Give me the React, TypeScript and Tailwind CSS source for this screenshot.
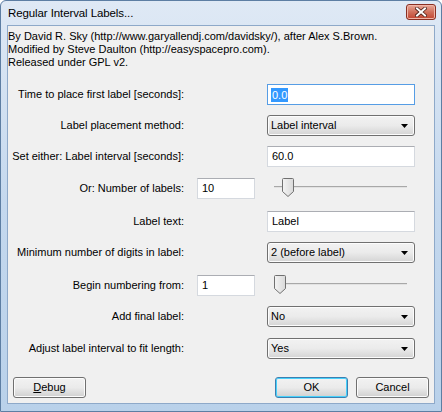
import React from "react";

// Win7 style "Regular Interval Labels..." dialog

const LABEL_W = "w-[176px]";

function TextBox({ value, small, selected }: { value: string; small?: boolean; selected?: boolean }) {
  return (
    <div
      className={`h-[21px] bg-white border flex items-center px-[3px] ${
        small ? "w-[58px]" : "w-[148px]"
      } ${selected ? "border-[#569de5]" : "border-[#d5d9df] border-t-[#abadb3]"}`}
    >
      {selected ? (
        <span className="bg-[#3399ff] text-white leading-[14px] px-px">{value}</span>
      ) : (
        <span className="px-px">{value}</span>
      )}
    </div>
  );
}

function Combo({ value }: { value: string }) {
  return (
    <div className="w-[148px] h-[21px] rounded-[3px] border border-[#707070] bg-gradient-to-b from-[#f2f2f2] via-[#ebebeb] to-[#d4d4d4] flex items-center justify-between pl-[3px] pr-[6px] shadow-[inset_0_0_0_1px_#fcfcfc]">
      <span>{value}</span>
      <svg width="7" height="4" viewBox="0 0 7 4">
        <path d="M0 0h7L3.5 4z" fill="#000" />
      </svg>
    </div>
  );
}

function Slider({ pos }: { pos: number }) {
  return (
    <div className="relative w-[133px] h-[21px] ml-[19px]">
      <div className="absolute left-0 right-0 top-[8px] h-[2px] border-t border-[#a8a8a8] bg-[#e2e2e2]" />
      <svg
        className="absolute top-0"
        style={{ left: pos }}
        width="12"
        height="19"
        viewBox="0 0 12 19"
      >
        <defs>
          <linearGradient id={`g${pos}`} x1="0" y1="0" x2="1" y2="0">
            <stop offset="0" stopColor="#f4f4f4" />
            <stop offset="1" stopColor="#d9d9d9" />
          </linearGradient>
        </defs>
        <path
          d="M1.5 0.5h9a1 1 0 0 1 1 1v12l-5.5 5-5.5-5v-12a1 1 0 0 1 1-1z"
          fill={`url(#g${pos})`}
          stroke="#707070"
        />
      </svg>
    </div>
  );
}

function Button({ children, primary, w = "w-[73px]" }: { children: React.ReactNode; primary?: boolean; w?: string }) {
  return (
    <div
      className={`${w} h-[21px] rounded-[3px] border flex items-center justify-center bg-gradient-to-b from-[#f2f2f2] via-[#ebebeb] to-[#d0d0d0] ${
        primary
          ? "border-[#3c7fb1] shadow-[inset_0_0_0_1px_#48d1fb]"
          : "border-[#707070] shadow-[inset_0_0_0_1px_#fcfcfc]"
      }`}
    >
      {children}
    </div>
  );
}

function Row({ label, mt, children }: { label: string; mt: string; children: React.ReactNode }) {
  return (
    <div className={`flex items-center h-[21px] ${mt}`}>
      <div className={`${LABEL_W} text-right whitespace-nowrap`}>{label}</div>
      {children}
    </div>
  );
}

export default function App() {
  return (
    <div className="w-[442px] h-[412px] font-['Liberation_Sans',Tahoma,sans-serif] text-[11px] leading-[13px] text-black">
      <div className="w-full h-full rounded-t-[6px] border border-[#5d7ea3] bg-gradient-to-b from-[#dfe9f5] via-[#c4d8ee] to-[#b9d1ea] flex flex-col">
        {/* title bar */}
        <div className="h-[24px] flex items-center justify-between pl-[7px] pr-[5px] shrink-0">
          <span className="text-[11.5px] tracking-[-0.1px] text-black">Regular Interval Labels...</span>
          <div className="w-[30px] h-[16px] -mt-[3px] rounded-[3px] border border-[#8a2f22] bg-gradient-to-b from-[#e8a898] via-[#d0705c] to-[#c24430] flex items-center justify-center shadow-[inset_0_0_0_1px_#f0b6a8]">
            <svg width="12" height="10" viewBox="0 0 12 10">
              <path d="M2 1.5l8 7M10 1.5l-8 7" stroke="#4a1e16" strokeWidth="3.6" strokeLinecap="square" />
              <path d="M2 1.5l8 7M10 1.5l-8 7" stroke="#fff" strokeWidth="2" strokeLinecap="square" />
            </svg>
          </div>
        </div>

        {/* client area */}
        <div className="mx-[6px] mb-[7px] flex-1 border border-[#8ea9c9] bg-[#f0f0f0] flex flex-col">
          <div className="pt-[4px] whitespace-nowrap">
            <div>By David R. Sky (http://www.garyallendj.com/davidsky/), after Alex S.Brown.</div>
            <div>Modified by Steve Daulton (http://easyspacepro.com).</div>
            <div>Released under GPL v2.</div>
          </div>

          <Row label="Time to place first label [seconds]:" mt="mt-[15px]">
            <div className="ml-[83px]">
              <TextBox value="0.0" selected />
            </div>
          </Row>
          <Row label="Label placement method:" mt="mt-[10px]">
            <div className="ml-[83px]">
              <Combo value="Label interval" />
            </div>
          </Row>
          <Row label="Set either: Label interval [seconds]:" mt="mt-[10px]">
            <div className="ml-[83px]">
              <TextBox value="60.0" />
            </div>
          </Row>
          <Row label="Or: Number of labels:" mt="mt-[11px]">
            <div className="ml-[13px]">
              <TextBox value="10" small />
            </div>
            <Slider pos={8} />
          </Row>
          <Row label="Label text:" mt="mt-[12px]">
            <div className="ml-[83px]">
              <TextBox value="Label" />
            </div>
          </Row>
          <Row label="Minimum number of digits in label:" mt="mt-[10px]">
            <div className="ml-[83px]">
              <Combo value="2 (before label)" />
            </div>
          </Row>
          <Row label="Begin numbering from:" mt="mt-[12px]">
            <div className="ml-[13px]">
              <TextBox value="1" small />
            </div>
            <Slider pos={0} />
          </Row>
          <Row label="Add final label:" mt="mt-[10px]">
            <div className="ml-[83px]">
              <Combo value="No" />
            </div>
          </Row>
          <Row label="Adjust label interval to fit length:" mt="mt-[11px]">
            <div className="ml-[83px]">
              <Combo value="Yes" />
            </div>
          </Row>

          <div className="mt-[18px] flex items-center justify-between px-[5px]">
            <Button>
              <span>
                <span className="underline">D</span>ebug
              </span>
            </Button>
            <div className="flex gap-[8px]">
              <Button primary>OK</Button>
              <Button>Cancel</Button>
            </div>
          </div>
        </div>
      </div>
    </div>
  );
}
